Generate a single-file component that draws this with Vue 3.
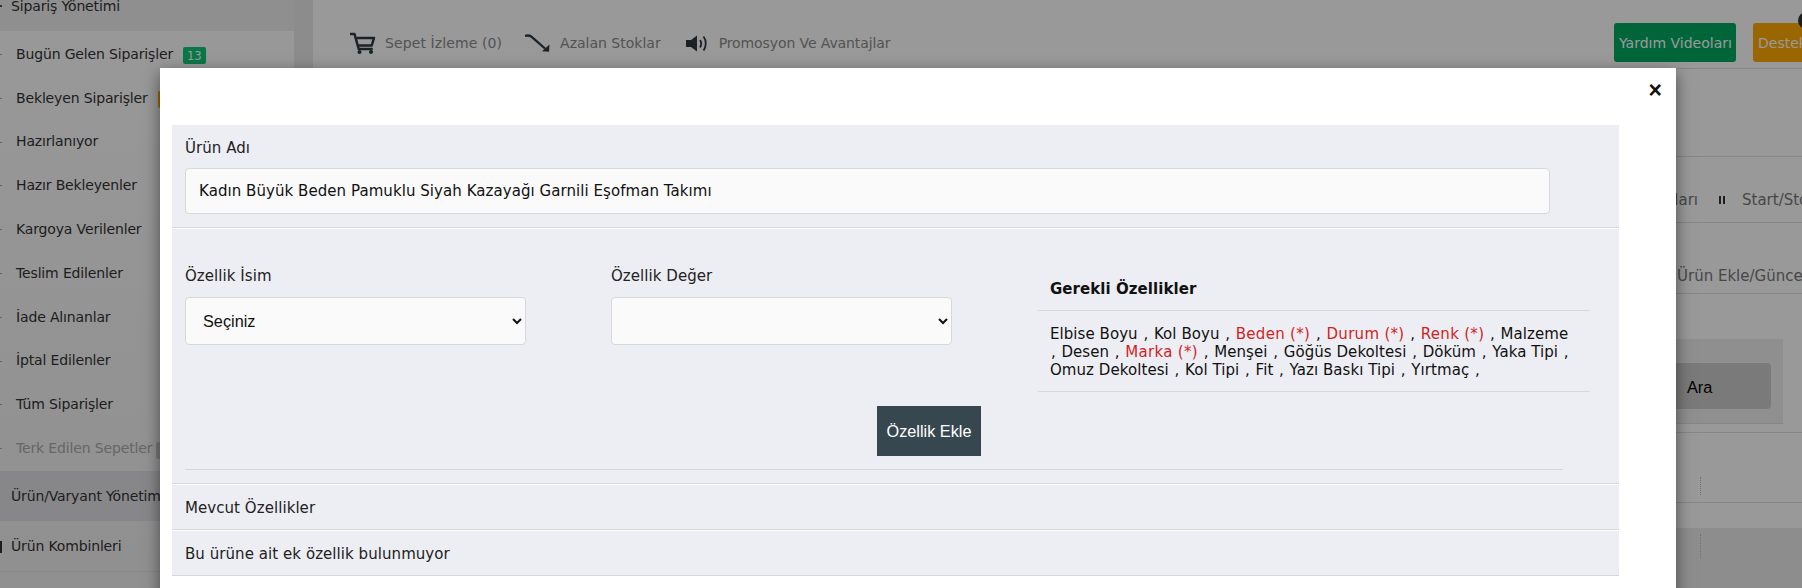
<script setup>
const items = [
  { t: 'Bugün Gelen Siparişler', b: '13', c: 'green' },
  { t: 'Bekleyen Siparişler', b: '6', c: 'orange' },
  { t: 'Hazırlanıyor' },
  { t: 'Hazır Bekleyenler' },
  { t: 'Kargoya Verilenler' },
  { t: 'Teslim Edilenler' },
  { t: 'İade Alınanlar' },
  { t: 'İptal Edilenler' },
  { t: 'Tüm Siparişler' },
  { t: 'Terk Edilen Sepetler', b: '0', c: 'gray', muted: true },
]
const required = [
  { t: 'Elbise Boyu' }, { t: 'Kol Boyu' }, { t: 'Beden (*)', red: true }, { t: 'Durum (*)', red: true },
  { t: 'Renk (*)', red: true }, { t: 'Malzeme' }, { t: 'Desen' }, { t: 'Marka (*)', red: true },
  { t: 'Menşei' }, { t: 'Göğüs Dekoltesi' }, { t: 'Döküm' }, { t: 'Yaka Tipi' },
  { t: 'Omuz Dekoltesi' }, { t: 'Kol Tipi' }, { t: 'Fit' }, { t: 'Yazı Baskı Tipi' }, { t: 'Yırtmaç' },
]
</script>

<template>
  <div class="page">
    <aside class="sidebar">
      <div class="group-head top"><span class="caret"></span>Sipariş Yönetimi</div>
      <div class="sub">
        <div v-for="i in items" :key="i.t" class="item" :class="{ muted: i.muted }">
          <span class="tick"></span>
          <span>{{ i.t }}</span>
          <span v-if="i.b" class="badge" :class="i.c">{{ i.b }}</span>
        </div>
      </div>
      <div class="group-head dark">Ürün/Varyant Yönetimi</div>
      <div class="group-head plain"><span class="mark"></span>Ürün Kombinleri</div>
    </aside>
    <main class="main">
      <header class="topbar">
        <div class="link">
          <svg viewBox="0 0 26 22" width="26" height="22">
            <path d="M0 2h4.500l4.200 15h14" fill="none" stroke="#2c3a41" stroke-width="2.500" stroke-linejoin="round"/>
            <path d="M6.500 6h17.500l-2.300 7.500H8.500" fill="none" stroke="#2c3a41" stroke-width="2.500" stroke-linejoin="round"/>
            <circle cx="9.500" cy="20" r="2" fill="#2c3a41"/><circle cx="21" cy="20" r="2" fill="#2c3a41"/>
          </svg>
          <span>Sepet İzleme (0)</span>
        </div>
        <div class="link l2">
          <svg viewBox="0 0 26 19" width="26" height="19">
            <path d="M0 1.800Q5 .8 7 3.200L20 14.500" fill="none" stroke="#2c3a41" stroke-width="2.300"/>
            <path d="M24.500 10.500L24 17.800L17 17.200z" fill="#2c3a41"/>
          </svg>
          <span>Azalan Stoklar</span>
        </div>
        <div class="link l3">
          <svg viewBox="0 0 22 17" width="22" height="17">
            <path d="M0 5h5L11 .5V16.500L5 12H0z" fill="#2c3a41"/>
            <path d="M14 5c1.600 2.400 1.600 5 0 7.500M17.500 1.500c3 4 3 10 0 14" fill="none" stroke="#2c3a41" stroke-width="1.800"/>
          </svg>
          <span>Promosyon Ve Avantajlar</span>
        </div>
        <div class="btn-help green-btn">Yardım Videoları</div>
        <div class="btn-help orange-btn">Destek Talepleri</div>
        <span class="notif"></span>
      </header>
      <div class="blank"></div>
      <div class="tabs">
        <span class="tab-first">Ayarları</span>
        <span class="pause"><i></i><i></i></span>
        <span>Start/Stop</span>
      </div>
      <div class="tabs2"><span>Ürün Ekle/Güncelle</span></div>
      <div class="search">
        <div class="search-box"><div class="ara">Ara</div></div>
      </div>
      <div class="row r1"><span class="dots"></span></div>
      <div class="row r2"><span class="dots"></span></div>
    </main>

    <div class="overlay"></div>

    <section class="modal">
      <div class="close">×</div>
      <div class="panel">
        <div class="sec s1">
          <label>Ürün Adı</label>
          <div class="input">Kadın Büyük Beden Pamuklu Siyah Kazayağı Garnili Eşofman Takımı</div>
        </div>
        <div class="sec s2">
          <div class="cols">
            <div class="col">
              <label>Özellik İsim</label>
              <select class="sel"><option>Seçiniz</option></select>
            </div>
            <div class="col">
              <label>Özellik Değer</label>
              <select class="sel"><option></option></select>
            </div>
            <div class="req">
              <div class="req-head">Gerekli Özellikler</div>
              <div class="req-body">
                <template v-for="q in required" :key="q.t">
                  <span :class="{ r: q.red }">{{ q.t }}</span>
                  {{ ' ' }}
                  <span class="comma">,</span>
                  {{ ' ' }}
                </template>
              </div>
            </div>
          </div>
          <button class="add">Özellik Ekle</button>
          <div class="rule"></div>
        </div>
        <div class="sec s3">Mevcut Özellikler</div>
        <div class="sec s3">Bu ürüne ait ek özellik bulunmuyor</div>
      </div>
    </section>
  </div>
</template>

<style>
html, body { margin: 0; overflow: hidden; background: #fff; }
</style>

<style scoped>
.page {
  position: relative;
  display: flex;
  width: 1802px;
  height: 588px;
  overflow: hidden;
  font-family: "DejaVu Sans", sans-serif;
  font-size: 14px;
  letter-spacing: -.15px;
  color: #333;
}
.overlay { position: absolute; inset: 0; background: rgba(0, 0, 0, .4); }

/* sidebar */
.sidebar {
  width: 294px;
  flex: none;
  background: linear-gradient(#ffffff, #f0f0f0);
  margin-right: 19px;
  box-shadow: 19px 0 0 #e9e9e9;
}
.group-head { display: flex; align-items: center; padding-left: 11px; height: 50px; position: relative; }
.top { margin-top: -19px; background: #efeff1; }
.dark { background: #e2e2e4; border-bottom: 1px solid #f2f2f2; }
.plain { border-bottom: 1px solid #e5e5e5; padding-bottom: 2px; box-sizing: border-box; }
.caret { position: absolute; left: 0; top: 24px; width: 2px; height: 2px; background: #555; }
.mark { position: absolute; left: 0; top: 19px; width: 2px; height: 12px; background: #333; }
.sub { height: 439px; display: flex; flex-direction: column; margin-top: 1px; }
.item { height: 43.800px; display: flex; align-items: center; padding-left: 16px; position: relative; flex: none; }
.tick { position: absolute; left: 0; top: 22px; width: 2px; height: 1px; background: #9fb0b8; }
.muted { color: #aaa; }
.badge {
  margin-left: 10px;
  padding: 0 4px;
  min-width: 14px;
  height: 17px;
  line-height: 19px;
  border-radius: 2px;
  font-size: 11.500px;
  color: #fff;
  text-align: center;
  margin-top: 4px;
  letter-spacing: 0;
}
.green { background: #12c77a; }
.orange { background: #ffaa00; }
.gray { background: #ccc; margin-left: 4px; }

/* main */
.main { flex: 1; min-width: 0; background: #fff; display: flex; flex-direction: column; }
.topbar {
  position: relative;
  height: 69px;
  box-sizing: border-box;
  border-bottom: 1px solid #dfdfdf;
  display: flex;
  align-items: center;
  padding: 18px 0 0 37px;
  flex: none;
  white-space: nowrap;
  color: #8a8a8a;
  letter-spacing: .1px;
}
.link { display: flex; align-items: center; gap: 9px; }
.l2 { margin-left: 23px; letter-spacing: 0; }
.l3 { margin-left: 25px; gap: 11px; letter-spacing: -.1px; }
.btn-help { height: 39px; line-height: 40px; border-radius: 3px; padding: 0 5px; color: #fff; position: absolute; top: 23px; letter-spacing: 0; }
.green-btn { background: #00aa61; left: 1301px; width: 112px; }
.orange-btn { background: #ffaa00; left: 1440px; }
.notif { position: absolute; left: 1485px; top: 12px; width: 17px; height: 17px; border-radius: 50%; background: #333; }
.blank { height: 87px; flex: none; border-bottom: 1px solid #dfdfdf; }
.tabs {
  height: 66px;
  flex: none;
  border-bottom: 1px solid #dfdfdf;
  display: flex;
  align-items: center;
  white-space: nowrap;
  font-size: 15px;
  letter-spacing: 0;
  color: #777;
  padding-top: 20px;
  box-sizing: border-box;
}
.tab-first { width: 1385px; text-align: right; flex: none; }
.pause { display: flex; gap: 2px; margin: 0 17px 0 21px; }
.pause i { width: 2px; height: 8px; background: #333; display: block; }
.tabs2 {
  height: 71px;
  flex: none;
  border-bottom: 1px solid #dfdfdf;
  box-sizing: border-box;
  padding: 44px 0 0 1364px;
  white-space: nowrap;
  font-size: 15px;
  letter-spacing: 0;
  color: #777;
}
.search { height: 139px; flex: none; border-bottom: 1px solid #dfdfdf; box-sizing: border-box; padding-top: 45px; }
.search-box { margin-left: 1100px; width: 370px; height: 85px; background: #efefef; border-bottom: 1px solid #dfdfdf; box-sizing: border-box; padding: 24px 12px 0 200px; }
.ara {
  height: 46px;
  background: #ccc;
  border-radius: 4px;
  font-family: "Liberation Sans", sans-serif;
  font-size: 16.300px;
  letter-spacing: 0;
  color: #000;
  display: flex;
  align-items: center;
  padding: 2px 0 0 74px;
  box-sizing: border-box;
}
.row { position: relative; flex: none; }
.r1 { height: 69px; border-bottom: 1px solid #dfdfdf; }
.r2 { flex: 1; background: linear-gradient(transparent 25px, #ebebeb 25px); }
.dots { position: absolute; left: 1387px; top: 44px; height: 18px; border-left: 1px dotted #bbb; }
.r2 .dots { top: 31px; height: 24px; }

/* modal */
.modal {
  position: absolute;
  left: 160px;
  top: 68px;
  width: 1516px;
  height: 530px;
  box-sizing: border-box;
  background: #fff;
  box-shadow: 0 5px 15px rgba(0, 0, 0, .5);
  padding: 57px 57px 0 12px;
  color: #222;
  font-size: 15px;
  letter-spacing: .06px;
}
.close {
  position: absolute;
  right: 14px;
  top: 7px;
  font-family: "Liberation Sans", sans-serif;
  font-weight: 700;
  font-size: 23px;
  line-height: 30px;
  color: #111;
}
.panel { background: #edeef3; display: flex; flex-direction: column; }
.sec { box-sizing: border-box; padding: 0 13px; border-bottom: 1px solid #d6d7da; }
.sec + .sec { border-top: 1px solid #fff; }
.s1 { height: 103px; padding-top: 13px; }
label { display: block; line-height: 20px; }
.s1 .input { margin-top: 10px; }
.input {
  width: 1365px;
  height: 46px;
  box-sizing: border-box;
  border: 1px solid #d8d8d8;
  border-radius: 4px;
  background: #fafafa;
  line-height: 44px;
  padding-left: 13px;
  color: #111;
}
.s2 { height: 256px; padding-top: 37px; }
.cols { display: flex; height: 140px; }
.col { width: 341px; margin-right: 85px; flex: none; }
.sel {
  display: block;
  margin-top: 11px;
  width: 341px;
  height: 48px;
  box-sizing: border-box;
  border: 1px solid #d8d8d8;
  border-radius: 4px;
  background: #fafafa;
  font-family: "Liberation Sans", sans-serif;
  font-size: 16.300px;
  color: #111;
  padding: 0 13px;
}
.req { width: 552px; margin-left: 1px; color: #111; margin-top: 1px; flex: none; }
.req-head { font-weight: 700; height: 44px; border-bottom: 1px solid #d8d8d8; box-sizing: border-box; padding: 13px 12px 0; line-height: 18px; }
.req-body { padding: 14px 12px 12px; line-height: 18px; border-bottom: 1px solid #d8d8d8; }
.comma { margin: 0 .9px; }
.r { color: #d11f26; letter-spacing: .3px; }
.add {
  display: block;
  margin: 0 0 0 692px;
  width: 104px;
  height: 50px;
  border: 0;
  background: #37474f;
  color: #fff;
  font-family: "Liberation Sans", sans-serif;
  font-size: 16.300px;
  padding: 0;
}
.rule { margin-top: 13px; width: 1378px; border-top: 1px solid #d6d7da; }
.s3 { height: 46px; display: flex; align-items: center; padding-top: 2px; }
</style>
